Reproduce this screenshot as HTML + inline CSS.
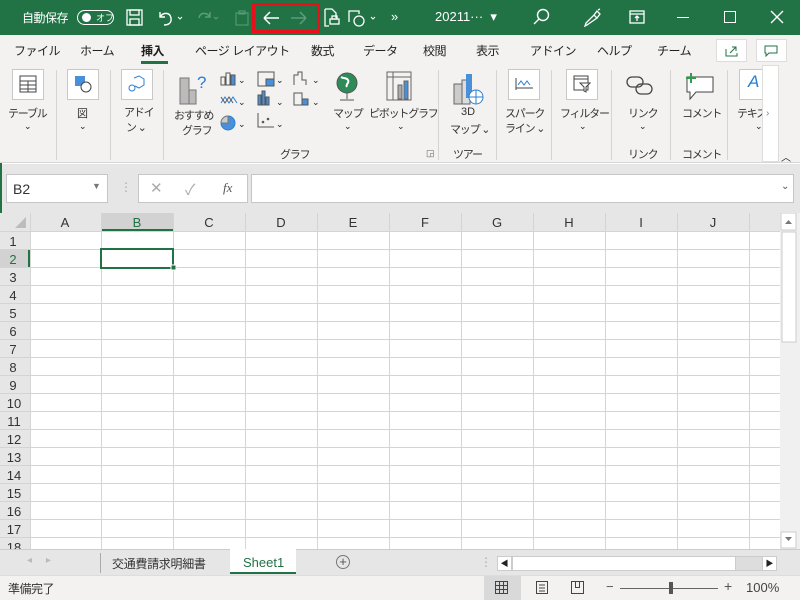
<!DOCTYPE html>
<html><head><meta charset="utf-8"><style>
*{margin:0;padding:0;box-sizing:border-box}
body{width:800px;height:600px;overflow:hidden;font-family:"Liberation Sans","Noto Sans CJK JP",sans-serif;background:#fff;position:relative;font-size:12px;color:#222}
.a{position:absolute}
.t{position:absolute;white-space:nowrap}
.title{left:0;top:0;width:800px;height:35px;background:#217346;color:#fff}
.tabs{left:0;top:35px;width:800px;height:30px;background:#f3f2f1}
.tabs .t{font-size:12px;letter-spacing:-0.5px;top:7px}
.rib{left:0;top:65px;width:800px;height:98px;background:#f3f2f1;border-bottom:1px solid #d6d6d6}
.lbl{font-size:11px;color:#333;letter-spacing:-1.2px}
.sep{position:absolute;top:5px;width:1px;height:90px;background:#d4d4d4}
.box{position:absolute;background:#fff;border:1px solid #c8c8c8}
</style></head><body>
<div class="a title">
<div class="t" style="left:22px;top:9px;font-size:12px;letter-spacing:-0.5px">自動保存</div>
<div class="a" style="left:77px;top:10px;width:37px;height:15px;border:1.5px solid #fff;border-radius:8px"></div>
<div class="a" style="left:82px;top:13px;width:9px;height:9px;background:#fff;border-radius:50%"></div>
<div class="t" style="left:96px;top:11px;font-size:9px">オフ</div>
<svg class="a" style="left:126px;top:9px" width="18" height="18" fill="none" stroke="#fff" stroke-width="1.3"><rect x="1" y="1" width="15" height="15"/><rect x="4" y="1" width="9" height="5"/><rect x="4" y="10" width="9" height="6"/></svg>
<svg class="a" style="left:157px;top:9px" width="28" height="18" fill="none" stroke="#fff" stroke-width="1.4"><path d="M3 3v5h5M3 8c3-5 10-5 11 1s-4 7-7 7"/><path d="M21 8l2 2 2-2" stroke-width="1"/></svg>
<svg class="a" style="left:195px;top:9px" width="28" height="18" fill="none" stroke="#5c9d7a" stroke-width="1.4"><path d="M15 3v5h-5M15 8c-3-5-10-5-11 1"/><path d="M19 8l2 2 2-2" stroke-width="1"/></svg>
<svg class="a" style="left:235px;top:10px" width="14" height="16" fill="none" stroke="#5c9d7a"><rect x="1" y="3" width="12" height="12"/><rect x="4" y="1" width="6" height="3"/></svg>
<div class="a" style="left:252px;top:3px;width:68px;height:30px;border:3px solid #e8111b"></div>
<svg class="a" style="left:262px;top:10px" width="50" height="16" fill="none" stroke-width="1.5"><path d="M2 8h15M2 8l6-6M2 8l6 6" stroke="#fff"/><path d="M44 8H29M44 8l-6-6M44 8l-6 6" stroke="#5c9d7a"/></svg>
<svg class="a" style="left:323px;top:8px" width="18" height="20" fill="none" stroke="#fff" stroke-width="1.3"><path d="M2 1h7l4 4v5M2 1v17h4"/><rect x="7" y="11" width="9" height="5"/><rect x="9" y="8" width="5" height="3"/></svg>
<svg class="a" style="left:347px;top:9px" width="32" height="18" fill="none" stroke="#fff" stroke-width="1.3"><path d="M2 13V2h10v3"/><circle cx="12" cy="12" r="5"/><path d="M24 8l2 2 2-2" stroke-width="1"/></svg>
<div class="t" style="left:391px;top:9px;font-size:13px">»</div>
<div class="t" style="left:435px;top:9px;font-size:13px">20211··· &nbsp;▾</div>
<svg class="a" style="left:533px;top:8px" width="18" height="18" fill="none" stroke="#fff" stroke-width="1.4"><circle cx="10" cy="7" r="5.5"/><path d="M6 11l-5 5"/></svg>
<svg class="a" style="left:583px;top:8px" width="20" height="20" fill="none" stroke="#fff" stroke-width="1.3"><path d="M4 17l-2 1 1-3 8-8 3 3zM11 7l3-4 3 3-3 4M15 2l2-1"/></svg>
<svg class="a" style="left:629px;top:10px" width="16" height="14" fill="none" stroke="#fff" stroke-width="1.3"><rect x="1" y="1" width="14" height="12"/><path d="M1 4h14M8 11V6M6 8l2-2 2 2"/></svg>
<div class="a" style="left:677px;top:17px;width:12px;height:1px;background:#fff"></div>
<div class="a" style="left:724px;top:11px;width:12px;height:12px;border:1.3px solid #fff"></div>
<svg class="a" style="left:770px;top:10px" width="14" height="14" stroke="#fff" stroke-width="1.4"><path d="M1 1l12 12M13 1L1 13"/></svg>
</div>
<div class="a tabs">
<div class="t" style="left:14px">ファイル</div>
<div class="t" style="left:80px">ホーム</div>
<div class="t" style="left:141px;font-weight:bold">挿入</div>
<div class="a" style="left:141px;top:26px;width:27px;height:3px;background:#217346"></div>
<div class="t" style="left:195px">ページ レイアウト</div>
<div class="t" style="left:311px">数式</div>
<div class="t" style="left:363px">データ</div>
<div class="t" style="left:423px">校閲</div>
<div class="t" style="left:476px">表示</div>
<div class="t" style="left:530px">アドイン</div>
<div class="t" style="left:597px">ヘルプ</div>
<div class="t" style="left:657px">チーム</div>
<div class="box" style="left:716px;top:4px;width:31px;height:23px;border-color:#ddd"></div>
<div class="box" style="left:756px;top:4px;width:31px;height:23px;border-color:#ddd"></div>
<svg class="a" style="left:724px;top:9px" width="16" height="14" fill="none" stroke="#217346"><path d="M2 5v7h11v-3M6 9l6-6M8 3h4v4"/></svg>
<svg class="a" style="left:764px;top:10px" width="14" height="12" fill="none" stroke="#217346"><path d="M1 1h12v7H5l-3 3V8H1z"/></svg>
</div>
<div class="a rib">
<div class="box" style="left:12px;top:4px;width:32px;height:31px"></div>
<svg class="a" style="left:19px;top:10px" width="18" height="18" fill="none" stroke="#444"><rect x="1" y="1" width="16" height="16"/><path d="M1 6h16M1 10h16M1 14h16M9 6v11"/></svg>
<div class="t lbl" style="left:8px;top:40px">テーブル</div><div class="t" style="left:24px;top:56px;font-size:9px">⌄</div>
<div class="sep" style="left:56px"></div>
<div class="box" style="left:67px;top:4px;width:32px;height:31px"></div>
<svg class="a" style="left:73px;top:9px" width="20" height="20"><rect x="2" y="2" width="10" height="10" fill="#4a90d9"/><circle cx="13" cy="13" r="5" fill="#fff" stroke="#444"/></svg>
<div class="t lbl" style="left:77px;top:40px">図</div><div class="t" style="left:79px;top:56px;font-size:9px">⌄</div>
<div class="sep" style="left:110px"></div>
<div class="box" style="left:121px;top:4px;width:32px;height:31px"></div>
<svg class="a" style="left:128px;top:10px" width="18" height="18" fill="none" stroke="#2a7fd4"><path d="M6 3l5-2 5 3v6l-5 3-4-2"/><circle cx="4" cy="13" r="3"/></svg>
<div class="t lbl" style="left:124px;top:39px">アドイ</div><div class="t lbl" style="left:126px;top:54px">ン ⌄</div>
<div class="sep" style="left:163px"></div>
<svg class="a" style="left:178px;top:5px" width="32" height="36"><rect x="2" y="8" width="9" height="26" fill="#bbb" stroke="#777"/><rect x="11" y="20" width="7" height="14" fill="#bbb" stroke="#777"/><text x="19" y="18" font-size="17" fill="#2a7fd4" font-family="Liberation Sans">?</text></svg>
<div class="t lbl" style="left:174px;top:42px">おすすめ</div><div class="t lbl" style="left:182px;top:57px">グラフ</div>
<svg class="a" style="left:220px;top:6px" width="130" height="70" fill="none" stroke="#555">
<rect x="1" y="6" width="4" height="8"/><rect x="6" y="2" width="4" height="12"/><rect x="11" y="4" width="4" height="10" fill="#4a90d9"/>
<path d="M1 32l4-6 4 6 4-6 4 6" stroke="#2a7fd4"/><path d="M1 26l4 6 4-6 4 6" />
<circle cx="8" cy="52" r="7" fill="#4a90d9" stroke="#2a7fd4"/><path d="M8 52V45A7 7 0 0 0 1 52z" fill="#ccc" stroke="#777"/>
<rect x="38" y="1" width="16" height="14"/><rect x="46" y="8" width="8" height="7" fill="#4a90d9"/>
<rect x="38" y="24" width="3" height="10" fill="#4a90d9"/><rect x="42" y="20" width="3" height="14" fill="#4a90d9"/><rect x="46" y="26" width="3" height="8" fill="#4a90d9"/>
<path d="M38 42v14h16" /><circle cx="43" cy="51" r=".8" fill="#4a90d9"/><circle cx="48" cy="48" r=".8" fill="#4a90d9"/>
<path d="M74 14V4h4V1h4v8h4v5"/><rect x="74" y="22" width="8" height="12"/><rect x="82" y="28" width="6" height="6" fill="#4a90d9"/>
</svg>
<div class="t" style="left:238px;top:10px;font-size:9px">⌄</div><div class="t" style="left:238px;top:32px;font-size:9px">⌄</div><div class="t" style="left:238px;top:54px;font-size:9px">⌄</div>
<div class="t" style="left:276px;top:10px;font-size:9px">⌄</div><div class="t" style="left:276px;top:32px;font-size:9px">⌄</div><div class="t" style="left:276px;top:54px;font-size:9px">⌄</div>
<div class="t" style="left:312px;top:10px;font-size:9px">⌄</div><div class="t" style="left:312px;top:32px;font-size:9px">⌄</div>
<svg class="a" style="left:333px;top:6px" width="28" height="32"><circle cx="14" cy="12" r="10" fill="#2e8b57" stroke="#555"/><path d="M8 6c3 2 5 0 7 3s-3 4-1 7" stroke="#fff" fill="none" stroke-width="2"/><path d="M14 22v6M7 29h14" stroke="#555"/></svg>
<div class="t lbl" style="left:333px;top:40px">マップ</div><div class="t" style="left:344px;top:56px;font-size:9px">⌄</div>
<svg class="a" style="left:386px;top:6px" width="28" height="32" fill="none" stroke="#666"><rect x="1" y="1" width="24" height="28"/><path d="M1 6h24M7 1v28"/><rect x="12" y="14" width="4" height="14" fill="#aaa"/><rect x="18" y="10" width="4" height="18" fill="#4a90d9"/></svg>
<div class="t lbl" style="left:369px;top:40px">ピボットグラフ</div><div class="t" style="left:397px;top:56px;font-size:9px">⌄</div>
<div class="t lbl" style="left:280px;top:81px">グラフ</div>
<div class="t" style="left:426px;top:83px;font-size:9px;color:#666">◲</div>
<div class="sep" style="left:438px"></div>
<svg class="a" style="left:452px;top:7px" width="34" height="34"><rect x="2" y="12" width="8" height="20" fill="#ccc" stroke="#666"/><rect x="10" y="8" width="8" height="24" fill="#ddd" stroke="#666"/><rect x="14" y="2" width="6" height="24" fill="#4a90d9"/><circle cx="24" cy="25" r="7" fill="#fff" stroke="#2a7fd4"/><path d="M17 25h14M24 18v14" stroke="#2a7fd4"/></svg>
<div class="t lbl" style="left:461px;top:41px;letter-spacing:0">3D</div><div class="t lbl" style="left:450px;top:56px">マップ ⌄</div>
<div class="t lbl" style="left:453px;top:81px">ツアー</div>
<div class="sep" style="left:496px"></div>
<div class="box" style="left:508px;top:4px;width:32px;height:31px"></div>
<svg class="a" style="left:515px;top:12px" width="18" height="14" fill="none" stroke="#444"><path d="M1 1v12M1 11h17"/><path d="M3 8l3-4 3 4 3-4 3 4" stroke="#2a7fd4"/></svg>
<div class="t lbl" style="left:505px;top:40px">スパーク</div><div class="t lbl" style="left:505px;top:55px">ライン ⌄</div>
<div class="sep" style="left:551px"></div>
<div class="box" style="left:566px;top:4px;width:32px;height:31px"></div>
<svg class="a" style="left:573px;top:10px" width="18" height="18" fill="none" stroke="#444"><rect x="1" y="1" width="14" height="14"/><path d="M1 4h14"/><path d="M7 8h10l-4 4v5l-2-1v-4z" fill="#fff"/></svg>
<div class="t lbl" style="left:560px;top:40px">フィルター</div><div class="t" style="left:579px;top:56px;font-size:9px">⌄</div>
<div class="sep" style="left:611px"></div>
<svg class="a" style="left:626px;top:10px" width="28" height="22" fill="none" stroke="#444" stroke-width="1.3"><rect x="1" y="2" width="16" height="10" rx="5"/><rect x="10" y="9" width="16" height="10" rx="5"/></svg>
<div class="t lbl" style="left:628px;top:40px">リンク</div><div class="t" style="left:639px;top:56px;font-size:9px">⌄</div>
<div class="t lbl" style="left:628px;top:81px">リンク</div>
<div class="sep" style="left:670px"></div>
<svg class="a" style="left:682px;top:7px" width="34" height="30" fill="none"><path d="M5 5h26v15H14l-6 7v-7H5z" stroke="#444" fill="#fff"/><path d="M9 1v10M4 6h10" stroke="#2e9d4c" stroke-width="2"/></svg>
<div class="t lbl" style="left:682px;top:40px">コメント</div>
<div class="t lbl" style="left:682px;top:81px">コメント</div>
<div class="sep" style="left:727px"></div>
<div class="box" style="left:739px;top:4px;width:30px;height:31px"></div>
<div class="t" style="left:748px;top:7px;font-size:17px;color:#2a7fd4;font-style:italic">A</div>
<div class="t lbl" style="left:737px;top:40px">テキス</div><div class="t" style="left:755px;top:56px;font-size:9px">⌄</div>
<div class="a" style="left:762px;top:0px;width:17px;height:97px;background:#fff;border:1px solid #ddd"></div>
<div class="t" style="left:766px;top:43px;font-size:10px;color:#888">›</div>
<div class="t" style="left:781px;top:84px;font-size:10px">︿</div>
</div>
<div class="a" style="left:0;top:164px;width:800px;height:49px;background:#e6e6e6"></div>
<div class="box" style="left:6px;top:174px;width:102px;height:29px;border-color:#c6c6c6"></div>
<div class="t" style="left:13px;top:181px;font-size:14px;color:#333">B2</div>
<div class="t" style="left:92px;top:181px;font-size:9px;color:#777">▼</div>
<div class="t" style="left:120px;top:180px;color:#aaa">⋮</div>
<div class="box" style="left:138px;top:174px;width:110px;height:29px;border-color:#c6c6c6"></div>
<div class="t" style="left:150px;top:179px;font-size:15px;color:#aaa">✕</div>
<div class="t" style="left:185px;top:179px;font-size:15px;color:#aaa">✓</div>
<div class="t" style="left:223px;top:180px;font-size:13px;color:#555;font-style:italic;font-family:'Liberation Serif',serif">fx</div>
<div class="box" style="left:251px;top:174px;width:543px;height:29px;border-color:#c6c6c6"></div>
<div class="t" style="left:781px;top:181px;font-size:10px;color:#555">⌄</div>
<div class="a" style="left:0;top:163px;width:2px;height:410px;background:#217346"></div>
<svg class="a" style="left:0;top:213px" width="800" height="336">
<rect x="0" y="0" width="780" height="18" fill="#e6e6e6"/>
<rect x="0" y="0" width="30" height="336" fill="#e6e6e6"/>
<rect x="101" y="0" width="72" height="18" fill="#d2d2d2"/>
<rect x="101" y="16" width="72" height="2" fill="#217346"/>
<rect x="0" y="37" width="30" height="18" fill="#d2d2d2"/>
<rect x="28" y="37" width="2" height="18" fill="#217346"/>
<path d="M26 4v11H15z" fill="#bdbdbd"/>
<g stroke="#d4d4d4" stroke-width="1">
<path d="M30.5 0v336M101.5 0v336M173.5 0v336M245.5 0v336M317.5 0v336M389.5 0v336M461.5 0v336M533.5 0v336M605.5 0v336M677.5 0v336M749.5 0v336"/>
<path d="M0 18.5h780M0 36.5h780M0 54.5h780M0 72.5h780M0 90.5h780M0 108.5h780M0 126.5h780M0 144.5h780M0 162.5h780M0 180.5h780M0 198.5h780M0 216.5h780M0 234.5h780M0 252.5h780M0 270.5h780M0 288.5h780M0 306.5h780M0 324.5h780"/>
</g>
<rect x="101" y="36" width="72" height="19" fill="none" stroke="#217346" stroke-width="2"/>
<rect x="171" y="52" width="5" height="5" fill="#217346" stroke="#fff"/>
<g font-family="Liberation Sans" font-size="13" fill="#333" text-anchor="middle">
<text x="65" y="14">A</text><text x="137" y="14" fill="#217346">B</text><text x="209" y="14">C</text><text x="281" y="14">D</text><text x="353" y="14">E</text><text x="425" y="14">F</text><text x="497" y="14">G</text><text x="569" y="14">H</text><text x="641" y="14">I</text><text x="713" y="14">J</text>
</g>
<g font-family="Liberation Sans" font-size="13" fill="#333" text-anchor="middle">
<text x="13" y="33">1</text><text x="13" y="51" fill="#217346">2</text><text x="13" y="69">3</text><text x="13" y="87">4</text><text x="13" y="105">5</text><text x="13" y="123">6</text><text x="13" y="141">7</text><text x="13" y="159">8</text><text x="13" y="177">9</text><text x="14" y="195">10</text><text x="14" y="213">11</text><text x="14" y="231">12</text><text x="14" y="249">13</text><text x="14" y="267">14</text><text x="14" y="285">15</text><text x="14" y="303">16</text><text x="14" y="321">17</text><text x="14" y="339">18</text>
</g>
<rect x="780" y="0" width="20" height="336" fill="#f0f0f0"/>
<rect x="781" y="0" width="15" height="17" fill="#fff" stroke="#ccc"/>
<rect x="782" y="19" width="14" height="110" fill="#fff" stroke="#ccc"/>
<rect x="781" y="319" width="15" height="16" fill="#fff" stroke="#ccc"/>
<path d="M785 11l3.5-4 3.5 4z" fill="#777"/><path d="M785 324l3.5 4 3.5-4z" fill="#777"/>
</svg>
<div class="a" style="left:0;top:549px;width:800px;height:26px;background:#e6e6e6;border-top:1px solid #ccc"></div>
<div class="t" style="left:27px;top:555px;font-size:10px;color:#bbb">◂ &nbsp; &nbsp; ▸</div>
<div class="a" style="left:100px;top:553px;width:1px;height:20px;background:#aaa"></div>
<div class="t" style="left:112px;top:555px;font-size:12px;letter-spacing:-0.3px;color:#333">交通費請求明細書</div>
<div class="a" style="left:230px;top:549px;width:66px;height:25px;background:#fff;border-bottom:2px solid #217346"></div>
<div class="t" style="left:243px;top:555px;font-size:13px;color:#217346">Sheet1</div>
<div class="a" style="left:336px;top:555px;width:14px;height:14px;border:1px solid #777;border-radius:50%;text-align:center;line-height:12px;font-size:13px;color:#555">+</div>
<div class="t" style="left:480px;top:555px;color:#aaa">⋮</div>
<div class="a" style="left:497px;top:556px;width:280px;height:15px;background:#ddd;border:1px solid #ccc"></div>
<div class="a" style="left:497px;top:556px;width:15px;height:15px;background:#fff;border:1px solid #ccc;font-size:8px;text-align:center;line-height:13px">◀</div>
<div class="a" style="left:512px;top:556px;width:224px;height:15px;background:#fff;border:1px solid #ccc"></div>
<div class="a" style="left:762px;top:556px;width:15px;height:15px;background:#fff;border:1px solid #ccc;font-size:8px;text-align:center;line-height:13px">▶</div>
<div class="a" style="left:0;top:575px;width:800px;height:25px;background:#f3f2f1;border-top:1px solid #ddd"></div>
<div class="t" style="left:8px;top:580px;font-size:12px;letter-spacing:-0.5px;color:#333">準備完了</div>
<div class="a" style="left:484px;top:576px;width:37px;height:24px;background:#d9d9d9"></div>
<svg class="a" style="left:495px;top:581px" width="110" height="14" fill="none" stroke="#444"><rect x=".5" y=".5" width="12" height="12"/><path d="M4.5 0v13M8.5 0v13M0 4.5h13M0 8.5h13"/><rect x="41.5" y=".5" width="11" height="12"/><path d="M44 4h6M44 7h6M44 10h6"/><path d="M76.5 .5h12v12h-12zM80.5 .5v6h4v-6"/></svg>
<div class="t" style="left:606px;top:579px;font-size:13px;color:#555">−</div>
<div class="a" style="left:620px;top:588px;width:98px;height:1px;background:#666"></div>
<div class="a" style="left:669px;top:582px;width:4px;height:12px;background:#555"></div>
<div class="t" style="left:724px;top:578px;font-size:14px;color:#555">+</div>
<div class="t" style="left:746px;top:580px;font-size:13px;color:#444">100%</div>
</body></html>
